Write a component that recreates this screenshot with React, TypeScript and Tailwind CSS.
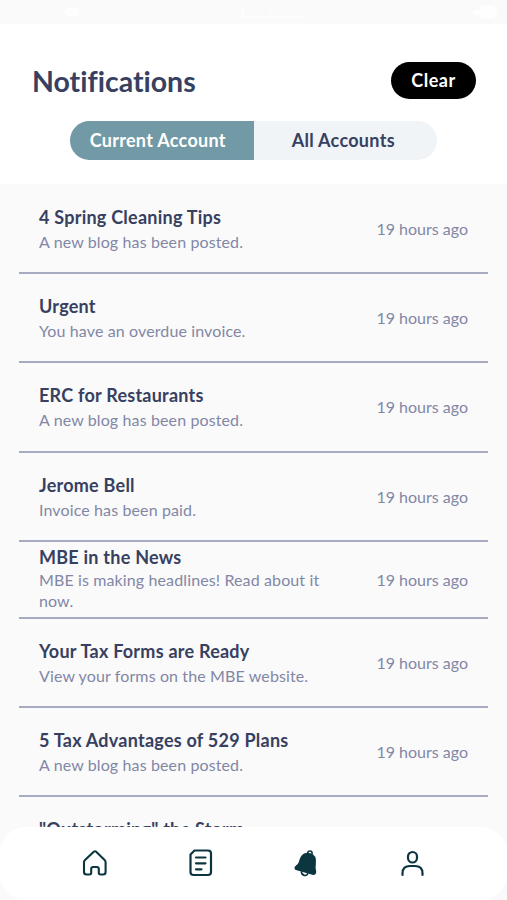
/**
 * Notifications screen - account notifications with bottom tab bar
 */

import { useState } from 'react';

interface Notification {
  id: number;
  title: string;
  body: string;
  time: string;
  compact?: boolean;
}

const initialNotifications: Notification[] = [
  { id: 1, title: '4 Spring Cleaning Tips', body: 'A new blog has been posted.', time: '19 hours ago' },
  { id: 2, title: 'Urgent', body: 'You have an overdue invoice.', time: '19 hours ago' },
  { id: 3, title: 'ERC for Restaurants', body: 'A new blog has been posted.', time: '19 hours ago' },
  { id: 4, title: 'Jerome Bell', body: 'Invoice has been paid.', time: '19 hours ago' },
  {
    id: 5,
    title: 'MBE in the News',
    body: 'MBE is making headlines! Read about it now.',
    time: '19 hours ago',
    compact: true,
  },
  { id: 6, title: 'Your Tax Forms are Ready', body: 'View your forms on the MBE website.', time: '19 hours ago' },
  { id: 7, title: '5 Tax Advantages of 529 Plans', body: 'A new blog has been posted.', time: '19 hours ago' },
  { id: 8, title: '"Outstorming" the Storm', body: '', time: '' },
];

export default function App() {
  const [tab, setTab] = useState<'current' | 'all'>('current');
  const [notifications, setNotifications] = useState(initialNotifications);

  return (
    <div className="flex h-[900px] w-[507px] flex-col overflow-hidden bg-[#fafafa] font-['Lato','Liberation_Sans',sans-serif] text-[#374060]">
      <StatusBar />

      <header className="h-40 shrink-0 bg-white">
        <div className="flex h-[75px] items-center justify-between pt-[38px] pr-[31px] pl-8">
          <h1 className="text-[28.5px] leading-9 font-bold [font-variant-ligatures:none]">Notifications</h1>
          <button
            onClick={() => setNotifications([])}
            className="h-[37px] w-[85px] rounded-full bg-black pb-px text-lg leading-none font-bold tracking-[0.5px] text-white"
          >
            Clear
          </button>
        </div>
        <div className="mx-auto mt-[22px] flex h-[39px] w-[367px] overflow-hidden rounded-full bg-[#f0f4f7] text-lg leading-none font-bold tracking-[0.3px]">
          <TabButton active={tab === 'current'} onClick={() => setTab('current')} label="Current Account" />
          <TabButton active={tab === 'all'} onClick={() => setTab('all')} label="All Accounts" />
        </div>
      </header>

      <ul className="min-h-0 flex-1 overflow-hidden px-[19px] pt-px">
        {notifications.map((item) => (
          <NotificationRow key={item.id} item={item} />
        ))}
      </ul>

      <nav className="flex h-[73px] shrink-0 items-center justify-between rounded-[26px] bg-white px-[79px] pb-0.5 text-[#0b3640]">
        <HomeIcon />
        <DocumentIcon />
        <BellIcon />
        <UserIcon />
      </nav>
    </div>
  );
}

function NotificationRow({ item }: { item: Notification }) {
  return (
    <li
      className={cn(
        'flex items-center justify-between border-b-2 border-[#a7abc1] pr-5 pl-5',
        item.compact ? 'h-[77px]' : 'h-[89.2px]'
      )}
    >
      <div className={cn('flex w-[300px] flex-col', item.compact ? 'pb-0.5' : 'gap-[2px]')}>
        <h2 className="text-lg leading-6 font-bold tracking-[0.24px] whitespace-nowrap">{item.title}</h2>
        <p className="min-h-[21px] text-base leading-[21px] tracking-[0.12px] text-[#8287a6]">{item.body}</p>
      </div>
      <span className="text-base leading-[21px] whitespace-nowrap text-[#8287a6]">{item.time}</span>
    </li>
  );
}

function TabButton({ active, onClick, label }: { active: boolean; onClick: () => void; label: string }) {
  return (
    <button
      onClick={onClick}
      className={cn('w-1/2 pb-px whitespace-nowrap', active ? 'bg-[#7299a6] pr-2 text-white' : 'pr-1')}
    >
      {label}
    </button>
  );
}

function StatusBar() {
  return (
    <div className="flex h-6 shrink-0 items-center justify-between pr-[10px] pl-[62px]">
      <svg width="18" height="12" viewBox="0 0 18 12" fill="white" opacity="0.7">
        <path d="M0 5Q5 5 6 1h9l3 4-3 6H6Z" />
      </svg>
      <svg width="64" height="13" viewBox="0 0 64 13" fill="white" opacity="0.6" className="-ml-1 mr-1">
        <path d="M1 1h2v9h25V6h2v4h32v2H1Z" />
      </svg>
      <svg width="24" height="15" viewBox="0 0 24 15" fill="white" opacity="0.8">
        <path d="M0 5h7V2q0-2 2-2h11q2 0 2 2v3h2v5h-2v2q0 2-2 2H9q-2 0-2-2v-2H0Z" />
      </svg>
    </div>
  );
}

function HomeIcon() {
  return (
    <svg width="32" height="32" viewBox="0 0 32 32" fill="none" stroke="currentColor" strokeWidth="2.1" strokeLinejoin="round">
      <path d="M17.2 4.8 25.600 13q1 1 1 2.300V25q0 2.500-2.500 2.500h-2.600q-1.700 0-1.700-1.700V22q0-2-2-2h-3.600q-2 0-2 2v3.800q0 1.700-1.700 1.700H7.500Q5 27.500 5 25v-9.700Q5 14 6 13l8.800-8.200q1.200-1.100 2.400 0Z" />
    </svg>
  );
}

function DocumentIcon() {
  return (
    <svg width="32" height="32" viewBox="0 0 32 32" fill="none" stroke="currentColor" strokeWidth="2.2" strokeLinecap="round" strokeLinejoin="round">
      <path d="M9.500 3.500H23q3 0 3 3V25q0 3-3 3H8.500q-3 0-3-3V7.500Z" />
      <path d="M11 10.500h9.500M11 16.300h9.500M11 22.300h5.500" />
    </svg>
  );
}

function BellIcon() {
  return (
    <svg width="32" height="32" viewBox="0 0 32 32" fill="none" stroke="currentColor" strokeWidth="1.6" strokeLinejoin="round">
      <path
        fill="currentColor"
        d="M14.500 7.300C18 5.700 22.800 7 24.700 10.500c1.200 3.700.1 7 .1 10.500l.6 3.500c.2 2-1 3-2.900 2.500L7 22.600c-2-.6-2.200-2-.8-3.100 2.300-1.700 3-2.300 3.500-4.500.7-3.200 2-6.300 4.800-7.700Z"
      />
      <circle cx="19.900" cy="6.200" r="2.200" />
      <path d="M11.400 24.300c-.3 4.500 5.500 5.700 6.500 1.800" />
    </svg>
  );
}

function UserIcon() {
  return (
    <svg width="32" height="32" viewBox="0 0 32 32" fill="none" stroke="currentColor" strokeWidth="2.2" strokeLinecap="round">
      <rect x="12" y="5" width="9" height="10.5" rx="4.500" />
      <path d="M6.500 28v-1.500Q6.500 19 14 19h5q7.500 0 7.500 7.500V28" />
    </svg>
  );
}

function cn(...classes: (string | boolean | undefined)[]): string {
  return classes.filter(Boolean).join(' ');
}
